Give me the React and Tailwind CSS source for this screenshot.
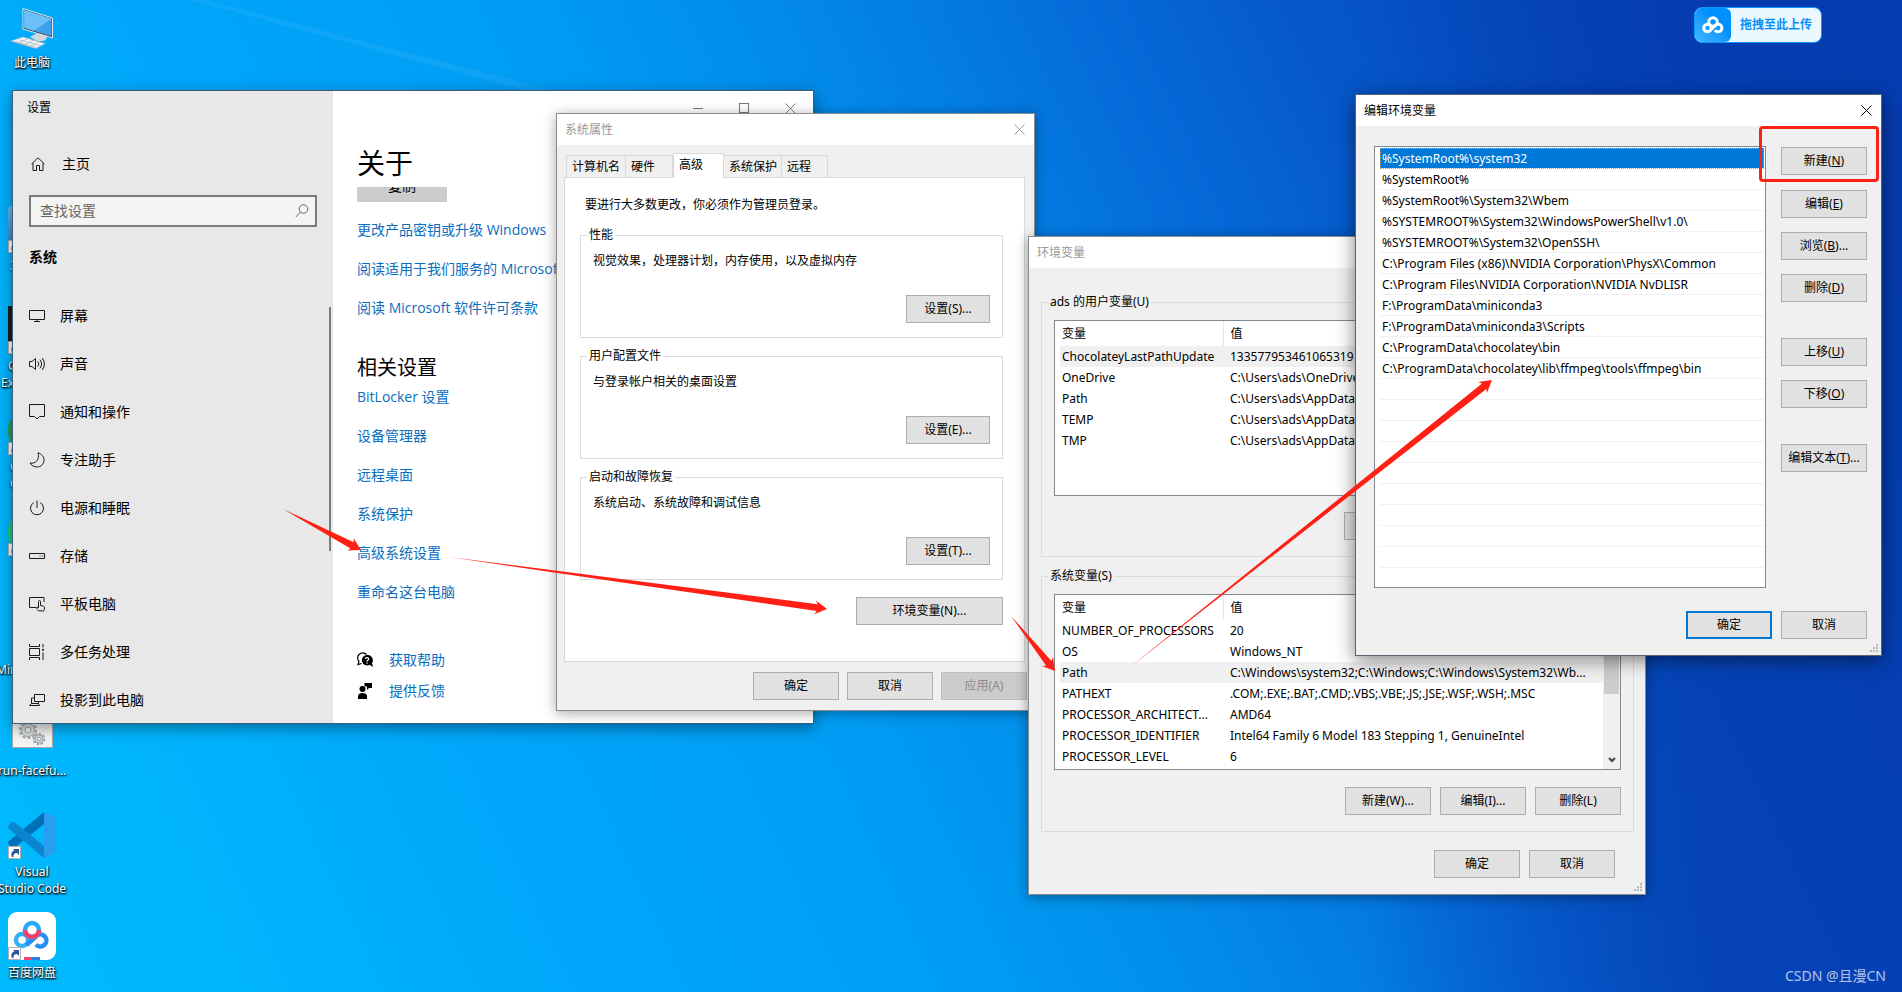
import clsx from 'clsx'

const navItems = [
  { icon: 'display', label: '屏幕' },
  { icon: 'sound', label: '声音' },
  { icon: 'notify', label: '通知和操作' },
  { icon: 'moon', label: '专注助手' },
  { icon: 'power', label: '电源和睡眠' },
  { icon: 'storage', label: '存储' },
  { icon: 'tablet', label: '平板电脑' },
  { icon: 'multitask', label: '多任务处理' },
  { icon: 'project', label: '投影到此电脑' },
]

const aboutLinks = ['更改产品密钥或升级 Windows', '阅读适用于我们服务的 Microsoft', '阅读 Microsoft 软件许可条款']

const relatedLinks = ['BitLocker 设置', '设备管理器', '远程桌面', '系统保护', '高级系统设置', '重命名这台电脑']

const propGroups = [
  { title: '性能', text: '视觉效果，处理器计划，内存使用，以及虚拟内存', button: '设置(S)...' },
  { title: '用户配置文件', text: '与登录帐户相关的桌面设置', button: '设置(E)...' },
  { title: '启动和故障恢复', text: '系统启动、系统故障和调试信息', button: '设置(T)...' },
]

const userVars = [
  ['ChocolateyLastPathUpdate', '133577953461065319'],
  ['OneDrive', 'C:\\Users\\ads\\OneDrive'],
  ['Path', 'C:\\Users\\ads\\AppData'],
  ['TEMP', 'C:\\Users\\ads\\AppData'],
  ['TMP', 'C:\\Users\\ads\\AppData'],
]

const systemVars = [
  ['NUMBER_OF_PROCESSORS', '20'],
  ['OS', 'Windows_NT'],
  ['Path', 'C:\\Windows\\system32;C:\\Windows;C:\\Windows\\System32\\Wb...'],
  ['PATHEXT', '.COM;.EXE;.BAT;.CMD;.VBS;.VBE;.JS;.JSE;.WSF;.WSH;.MSC'],
  ['PROCESSOR_ARCHITECT...', 'AMD64'],
  ['PROCESSOR_IDENTIFIER', 'Intel64 Family 6 Model 183 Stepping 1, GenuineIntel'],
  ['PROCESSOR_LEVEL', '6'],
]

const pathEntries = [
  '%SystemRoot%\\system32',
  '%SystemRoot%',
  '%SystemRoot%\\System32\\Wbem',
  '%SYSTEMROOT%\\System32\\WindowsPowerShell\\v1.0\\',
  '%SYSTEMROOT%\\System32\\OpenSSH\\',
  'C:\\Program Files (x86)\\NVIDIA Corporation\\PhysX\\Common',
  'C:\\Program Files\\NVIDIA Corporation\\NVIDIA NvDLISR',
  'F:\\ProgramData\\miniconda3',
  'F:\\ProgramData\\miniconda3\\Scripts',
  'C:\\ProgramData\\chocolatey\\bin',
  'C:\\ProgramData\\chocolatey\\lib\\ffmpeg\\tools\\ffmpeg\\bin',
]

const arrows = [
  { from: [283, 509], to: [361, 550], width: 7 },
  { from: [449, 557], to: [827, 609], width: 7 },
  { from: [1011, 616], to: [1055, 671], width: 7 },
  { from: [1129, 668], to: [1492, 380], width: 7 },
]

const iconPaths = {
  home: 'M1.5 8 8 1.8 14.5 8M3 7v7.5h3.5V9.5h3v5H13V7',
  display: 'M.5 2.5h15v9H.5zM8 11.5v2M5 13.5h6',
  sound: 'M.5 5.5h2.5l3.5-3v11l-3.5-3H.5zM8.8 5.5q2 2.500 0 5M11 3.700q3.200 4.300 0 8.600M13.200 2q4.500 6 0 12',
  notify: 'M.5 .5h15v12h-5l-2.500 2.500-2.500-2.500h-5z',
  moon: 'M9 .8c3.500 1 6.200 4 6 7.700-.2 3.800-3.200 6.500-7 6.500-3 0-5.500-1.500-7-4 5.500 1.200 10-3.500 8-10.200z',
  power: 'M8 .5v7.500M4.800 2.600a6.500 6.500 0 1 0 6.400 0',
  storage: 'M.5 5.500h15v5H.5zM10.500 8h1M12.800 8h1',
  tablet: 'M15 6V1.500H.5v10H7M9.500 14.800c-1.500-1.500-2-2.500-1.800-3.500.8-.3 1.500.2 1.800.7V5.500c0-1.300 2-1.300 2 0v4l3 .7c.8.300 1 .8 1 1.800 0 1.500-.5 2.300-1 3z',
  multitask: 'M.5 0v2.500h10V0M.5 4.500h10v7H.5zM.5 16v-2.500h10V16M14 0v3.500M14 8.500V16M14 4.500v2.500M13 5.800h2',
  project: 'M5.500 2.500h10v7h-10zM5.500 6H2.500v5.500h7V9.500M2.500 11.500l-2 2h10l-1-2',
}

function LineIcon({ name }) {
  return (
    <svg viewBox="0 0 16 16" className="h-4 w-4 shrink-0" fill="none" stroke="#1a1a1a">
      <path d={iconPaths[name]} />
    </svg>
  )
}

function CloseIcon() {
  return (
    <svg viewBox="0 0 11 11" className="h-[11px] w-[11px]" fill="none" stroke="currentColor">
      <path d="M.5.5l10 10M10.500.5l-10 10" />
    </svg>
  )
}

function PushButton({ children, className, ...props }) {
  return (
    <button
      type="button"
      className={clsx(
        'h-7 shrink-0 whitespace-nowrap border text-center disabled:border-[#bfbfbf] disabled:bg-[#cccccc] disabled:text-[#8a8a8a]',
        className ?? 'w-[86px] border-[#adadad] bg-[#e1e1e1]'
      )}
      {...props}
    >
      {children}
    </button>
  )
}

function TitleBar({ title, active }) {
  return (
    <div className={clsx('flex h-[31px] items-center justify-between bg-white pl-2 pr-[9px]', active ? 'text-black' : 'text-[#999999]')}>
      <h2>{title}</h2>
      <button type="button" aria-label="关闭">
        <CloseIcon />
      </button>
    </div>
  )
}

function ResizeGrip() {
  return (
    <svg viewBox="0 0 10 10" className="absolute bottom-0.5 right-0.5 h-2.5 w-2.5" fill="#b8b8b8">
      <path d="M7 1h2v2H7zM4 4h2v2H4zM7 4h2v2H7zM1 7h2v2H1zM4 7h2v2H4zM7 7h2v2H7z" />
    </svg>
  )
}

function SettingsWindow() {
  return (
    <section className="absolute left-3 top-[90px] flex h-[634px] w-[802px] overflow-hidden border border-[#3f5f78] bg-white font-['Open_Sans','Noto_Sans_CJK_SC',sans-serif] text-sm text-black shadow-[0_4px_14px_rgba(0,0,0,0.4)]">
      <div className="relative w-80 shrink-0 bg-[#e8e8e8]">
        <h2 className="flex h-[34px] items-center pl-3.5 text-xs">设置</h2>
        <a href="#home" className="mt-[19px] flex h-10 items-center gap-4 pl-[17px]">
          <LineIcon name="home" />
          主页
        </a>
        <label className="mx-4 mt-[11px] flex h-8 w-72 items-center border-2 border-[#7b7b7b] bg-[#f4f4f4] pl-[9px] pr-1.5">
          <span className="sr-only">查找设置</span>
          <input type="text" placeholder="查找设置" className="min-w-0 flex-1 bg-transparent outline-none placeholder:text-[#666666]" />
          <svg viewBox="0 0 14 14" className="h-3.5 w-3.5" fill="none" stroke="#666666">
            <circle cx="8.500" cy="5" r="4.300" />
            <path d="M5.500 8 .8 13" />
          </svg>
        </label>
        <h3 className="mt-5 pl-4 font-bold leading-5">系统</h3>
        <nav className="mt-[25px]">
          {navItems.map((item) => (
            <a key={item.icon} href={`#${item.icon}`} className="flex h-12 items-center gap-[15px] pl-4">
              <LineIcon name={item.icon} />
              {item.label}
            </a>
          ))}
        </nav>
        <div className="absolute right-0.5 top-[216px] h-[244px] w-0.5 bg-[#7d7d7d]" />
      </div>

      <div className="min-w-0 flex-1">
        <div className="flex h-[34px] justify-end text-[#777777]">
          <button type="button" aria-label="最小化" className="flex w-[46px] items-center justify-center">
            <span className="h-px w-2.5 bg-[#777777]" />
          </button>
          <button type="button" aria-label="最大化" className="flex w-[46px] items-center justify-center">
            <span className="h-2.5 w-2.5 border border-[#777777]" />
          </button>
          <button type="button" aria-label="关闭" className="flex w-[46px] items-center justify-center">
            <CloseIcon />
          </button>
        </div>
        <div className="pl-6">
          <h1 className="mt-5 text-[28px] leading-9">关于</h1>
          <div className="mt-1.5 flex h-[15px] items-end overflow-hidden">
            <button type="button" className="h-8 w-[90px] shrink-0 bg-[#cccccc]">复制</button>
          </div>
          <div className="mt-[18px] flex flex-col items-start gap-[19px] whitespace-nowrap leading-5 text-[#0a6dbd]">
            {aboutLinks.map((text) => (
              <a key={text} href="#about">{text}</a>
            ))}
          </div>
          <h2 className="mt-9 text-xl leading-7">相关设置</h2>
          <div className="mt-[5px] flex flex-col items-start gap-[19px] leading-5 text-[#0a6dbd]">
            {relatedLinks.map((text) => (
              <a key={text} href="#related">{text}</a>
            ))}
          </div>
          <div className="mt-12 flex flex-col items-start gap-[11px] leading-5 text-[#0a6dbd]">
            <a href="#help" className="flex items-center gap-4">
              <svg viewBox="0 0 16 16" className="h-4 w-4">
                <path d="M9.500 2.500A5 5 0 1 0 2 9.500L1 12.500l3.500-1" fill="none" stroke="#000" strokeWidth="1.200" />
                <path d="M10 3a5.200 5.200 0 1 0 2.500 9.800L16 15l-1-4A5.200 5.200 0 0 0 10 3z" fill="#000" />
                <path d="M8.300 7c.2-2 3.400-1.900 3.400 0 0 1.200-1.700 1.200-1.700 2.500M10 10.500v1.200" fill="none" stroke="#fff" strokeWidth="1.200" />
              </svg>
              获取帮助
            </a>
            <a href="#feedback" className="flex items-center gap-4">
              <svg viewBox="0 0 16 16" className="h-4 w-4" fill="#000">
                <circle cx="5.500" cy="6" r="3" />
                <path d="M1 16v-3c0-4 9-4 9 0v3zM7.500 0H15v5h-3l-2 2V3.500H7.500z" />
              </svg>
              提供反馈
            </a>
          </div>
        </div>
      </div>
    </section>
  )
}

function GroupBox({ title, className, children }) {
  return (
    <fieldset className={clsx('border border-[#dcdcdc] px-3', className)}>
      <legend className="-ml-1.5 px-0.5 leading-[18px]">{title}</legend>
      {children}
    </fieldset>
  )
}

function Tab({ children, active, className }) {
  return (
    <button
      type="button"
      role="tab"
      aria-selected={Boolean(active)}
      className={clsx(
        'border border-b-0 border-[#d9d9d9] pl-[5px] text-left',
        active ? '-mb-px h-[25px] bg-white' : 'h-[22px] bg-[#f0f0f0]',
        className
      )}
    >
      {children}
    </button>
  )
}

function SystemPropertiesWindow() {
  return (
    <section className="absolute left-[556px] top-[113px] w-[479px] border border-[#8c8c8c] bg-[#f0f0f0] pb-2.5 shadow-[0_2px_12px_rgba(0,0,0,0.35)]">
      <TitleBar title="系统属性" />
      <div role="tablist" className="relative ml-[9px] flex h-8 items-end">
        <Tab className="w-[60px]">计算机名</Tab>
        <Tab className="w-[47px] border-l-0">硬件</Tab>
        <Tab active className="w-[51px] pb-0.5">高级</Tab>
        <Tab className="w-[58px] border-l-0">系统保护</Tab>
        <Tab className="w-[46px] border-l-0">远程</Tab>
      </div>
      <div className="ml-[7px] mr-[9px] h-[485px] border border-[#d9d9d9] bg-white pl-[15px] pr-[21px]">
        <p className="ml-[5px] mt-[18px] leading-[18px]">要进行大多数更改，你必须作为管理员登录。</p>
        <div className="mt-3 flex flex-col gap-[9px]">
          {propGroups.map((group) => (
            <GroupBox key={group.title} title={group.title} className="pb-3.5">
              <p className="mt-2 leading-[18px]">{group.text}</p>
              <div className="mt-[25px] flex justify-end">
                <PushButton className="w-[84px] border-[#adadad] bg-[#e1e1e1]">{group.button}</PushButton>
              </div>
            </GroupBox>
          ))}
        </div>
        <div className="mt-[17px] flex justify-end">
          <PushButton className="w-[147px] border-[#adadad] bg-[#e1e1e1]">环境变量(N)...</PushButton>
        </div>
      </div>
      <div className="mr-[7px] mt-2.5 flex justify-end gap-2">
        <PushButton>确定</PushButton>
        <PushButton>取消</PushButton>
        <PushButton disabled>应用(A)</PushButton>
      </div>
    </section>
  )
}

function VariableList({ rows, selected, scroll }) {
  return (
    <div className="flex h-44 justify-between border border-[#828790] bg-white pl-[5px]">
      <table className="w-[543px] table-fixed self-start border-collapse text-left">
        <thead>
          <tr className="h-[25px]">
            <th className="w-[163px] border-r border-[#e5e5e5] p-0 pl-0.5 font-normal">变量</th>
            <th className="p-0 pl-[7px] font-normal">值</th>
          </tr>
        </thead>
        <tbody>
          {rows.map(([name, value], i) => (
            <tr key={name} className={clsx('h-[21px] whitespace-nowrap', i === selected && 'bg-[#f0f0f0]')}>
              <td className="p-0 pl-0.5 leading-[21px]">{name}</td>
              <td className="p-0 pl-[7px] leading-[21px]">{value}</td>
            </tr>
          ))}
        </tbody>
      </table>
      {scroll && (
        <div className="flex w-[17px] flex-col items-center justify-between bg-[#f0f0f0] pb-1.5">
          <div className="h-[99px] w-[15px] bg-[#cdcdcd]" />
          <svg viewBox="0 0 8 6" className="h-1.5 w-2" fill="none" stroke="#444444" strokeWidth="2">
            <path d="M1 1l3 3 3-3" />
          </svg>
        </div>
      )}
    </div>
  )
}

function EnvironmentWindow() {
  return (
    <section className="absolute left-[1028px] top-[236px] w-[618px] border border-[#8c8c8c] bg-[#f0f0f0] pb-4 shadow-[0_2px_12px_rgba(0,0,0,0.4)]">
      <TitleBar title="环境变量" />
      <div className="mt-[25px] flex flex-col gap-2.5 px-3">
        <GroupBox title="ads 的用户变量(U)" className="pb-4">
          <div className="mt-[9px]">
            <VariableList rows={userVars} selected={0} />
          </div>
          <div className="mt-4 flex justify-end gap-[9px]">
            <PushButton>新建(N)...</PushButton>
            <PushButton>编辑(E)...</PushButton>
            <PushButton>删除(D)</PushButton>
          </div>
        </GroupBox>
        <GroupBox title="系统变量(S)" className="pb-4">
          <div className="mt-[9px]">
            <VariableList rows={systemVars} selected={2} scroll />
          </div>
          <div className="mt-[17px] flex justify-end gap-[9px]">
            <PushButton>新建(W)...</PushButton>
            <PushButton>编辑(I)...</PushButton>
            <PushButton>删除(L)</PushButton>
          </div>
        </GroupBox>
      </div>
      <div className="mr-[30px] mt-[18px] flex justify-end gap-[9px]">
        <PushButton>确定</PushButton>
        <PushButton>取消</PushButton>
      </div>
      <ResizeGrip />
    </section>
  )
}

function EditWindow() {
  return (
    <section className="absolute left-[1355px] top-[94px] w-[527px] border border-[#5a6470] bg-[#f0f0f0] pb-4 shadow-[0_4px_18px_rgba(0,0,0,0.5)]">
      <TitleBar title="编辑环境变量" active />
      <div className="mt-5 flex justify-between pl-[18px] pr-3.5">
        <ul className="h-[442px] w-[392px] overflow-hidden border border-[#828790] bg-white pl-[5px] pr-px pt-px">
          {Array.from({ length: 20 }, (_, i) => (
            <li
              key={i}
              className={clsx(
                'h-[21px] whitespace-pre border-b border-[#f1f1f1] pl-0.5 leading-[22px]',
                i === 0 && 'bg-[#0078d7] text-white outline-1 -outline-offset-1 outline-dotted outline-[#e89a4a]'
              )}
            >
              {pathEntries[i]}
            </li>
          ))}
        </ul>
        <div className="relative flex flex-col pt-px">
          <PushButton>新建(<u>N</u>)</PushButton>
          <div className="mt-[15px] flex flex-col gap-3.5">
            <PushButton>编辑(<u>E</u>)</PushButton>
            <PushButton>浏览(<u>B</u>)...</PushButton>
            <PushButton>删除(<u>D</u>)</PushButton>
          </div>
          <div className="mt-9 flex flex-col gap-3.5">
            <PushButton>上移(<u>U</u>)</PushButton>
            <PushButton>下移(<u>O</u>)</PushButton>
          </div>
          <div className="mt-9">
            <PushButton>编辑文本(<u>T</u>)...</PushButton>
          </div>
          {/* highlight around the "new" button */}
          <div className="pointer-events-none absolute -left-[22px] -top-5 h-14 w-[120px] rounded-sm border-[3px] border-[#ff2015]" />
        </div>
      </div>
      <div className="mr-3.5 mt-[23px] flex justify-end gap-[9px]">
        <PushButton className="w-[86px] border-2 border-[#0078d7] bg-[#e1e1e1]">确定</PushButton>
        <PushButton>取消</PushButton>
      </div>
      <ResizeGrip />
    </section>
  )
}

function arrowPoints({ from, to, width }) {
  const dx = to[0] - from[0]
  const dy = to[1] - from[1]
  const len = Math.hypot(dx, dy)
  // along the arrow, then across it
  const at = (along, across) =>
    `${from[0] + (dx * along - dy * across) / len},${from[1] + (dy * along + dx * across) / len}`
  const neck = len - 10
  return [
    at(0, 0),
    at(neck, -width / 2),
    at(len - 12, -width),
    at(len, 0),
    at(len - 12, width),
    at(neck, width / 2),
  ].join(' ')
}

function Arrows() {
  return (
    <svg className="pointer-events-none absolute left-0 top-0 h-[992px] w-[1902px]" viewBox="0 0 1902 992" fill="#ff2015">
      {arrows.map((arrow) => (
        <polygon key={arrow.from.join()} points={arrowPoints(arrow)} />
      ))}
    </svg>
  )
}

function ShortcutBadge() {
  return (
    <svg viewBox="0 0 13 13" className="absolute bottom-0 left-0 h-[13px] w-[13px]">
      <path d="M.5.5h12v12H.5z" fill="#fff" stroke="#b0b0b0" />
      <path d="M4 11C2.500 7.500 4 5 6.500 4.500L5 3h6v6L9 7C6.500 7 5 8.500 5.500 11z" fill="#2b5797" />
    </svg>
  )
}

const labelStyle = 'text-center leading-[17px] text-white [text-shadow:0_1px_2px_#000,1px_1px_2px_#000]'

function DesktopIcons() {
  return (
    <>
      <div className="absolute left-[-16px] top-1.5 flex w-24 flex-col items-center">
        <svg viewBox="0 0 44 46" className="h-[46px] w-11">
          <path d="M13 2.500 42.500 12v20L13 23z" fill="#3b4d5c" stroke="#dfe9f0" />
          <path d="M14.200 4 41.500 12.700v17.600L14.200 21.800z" fill="#3ea0ec" />
          <path d="M14.200 4 41.500 12.700 24 24.800l-9.800-3z" fill="#6cc0f8" />
          <path d="M20 31l7-4 11 3-3 4.500-7 1z" fill="#cfd8de" />
          <path d="M1 35l12-4 22 6.500-9 5z" fill="#f2f5f7" stroke="#a9b4bc" strokeWidth=".7" />
          <path d="M5 35.500 27 41.500M9 33.800l22 6M8 37.500l10-5M14 39l10-5M20 40.500l9-4.500" stroke="#a9b4bc" strokeWidth=".7" fill="none" />
        </svg>
        <span className={clsx(labelStyle, 'mt-0.5')}>此电脑</span>
      </div>

      {/* icons mostly hidden behind the settings window */}
      <div className="absolute left-2 top-[206px] h-[47px] w-12 rounded bg-linear-to-b from-[#6fb7ee] to-[#2b78c8]">
        <ShortcutBadge />
      </div>
      <span className={clsx(labelStyle, 'absolute left-2.5 top-[257px]')}>3</span>
      <div className="absolute left-2 top-[306px] h-12 w-12 bg-[#1c1a1a]">
        <ShortcutBadge />
      </div>
      <span className={clsx(labelStyle, 'absolute left-2 top-[357px]')}>G</span>
      <span className={clsx(labelStyle, 'absolute left-px top-[374px]')}>Ex</span>
      <div className="absolute left-2 top-[407px] h-12 w-12 rounded-full bg-[#2f9e46]">
        <ShortcutBadge />
      </div>
      <span className={clsx(labelStyle, 'absolute left-2.5 top-[458px]')}>C</span>
      <span className={clsx(labelStyle, 'absolute left-2.5 top-[475px]')}>C</span>
      <div className="absolute left-2 top-[508px] h-12 w-12 rounded-full bg-[#1fd267]">
        <ShortcutBadge />
      </div>
      <span className={clsx(labelStyle, 'absolute left-[-4px] top-[661px]')}>Min</span>

      <div className="absolute left-[-16px] top-[699px] flex w-24 flex-col items-center">
        <svg viewBox="0 0 41 49" className="h-[49px] w-[41px]">
          <path d="M.5.5h40v48H.5z" fill="#f4f4f4" stroke="#a6a6a6" />
          <g fill="none" stroke="#a0a6ab">
            <circle cx="16" cy="31" r="6.500" fill="#dde1e4" />
            <circle cx="16" cy="31" r="8" strokeWidth="2" strokeDasharray="3 2" />
            <circle cx="16" cy="31" r="3" fill="#f4f4f4" />
            <circle cx="27" cy="40" r="4" fill="#dde1e4" />
            <circle cx="27" cy="40" r="5.300" strokeWidth="2" strokeDasharray="2.500 1.500" />
            <circle cx="27" cy="40" r="1.800" fill="#f4f4f4" />
          </g>
        </svg>
        <span className={clsx(labelStyle, 'mt-3.5')}>run-facefu...</span>
      </div>

      <div className="absolute left-[-16px] top-[811px] flex w-24 flex-col items-center">
        <div className="relative">
          <svg viewBox="0 0 48 48" className="h-12 w-12">
            <path d="M1 30c-1.500 1.500-1 3 0 4l2.500 2.500c1 .8 2.200.8 3.200 0L36 13V1z" fill="#0070b8" />
            <path d="M1 18c-1.500-1.500-1-3 0-4l2.500-2.500c1-.8 2.200-.8 3.200 0L36 35v12z" fill="#0a86cf" />
            <path d="M36 1 47 6c.8.400 1 1 1 2v32c0 1-.2 1.600-1 2l-11 5z" fill="#2a9df0" />
          </svg>
          <ShortcutBadge />
        </div>
        <span className={clsx(labelStyle, 'mt-1')}>
          Visual
          <br />
          Studio Code
        </span>
      </div>

      <div className="absolute left-[-16px] top-[912px] flex w-24 flex-col items-center">
        <div className="relative">
          <svg viewBox="0 0 48 48" className="h-12 w-12">
            <rect width="48" height="48" rx="9" fill="#fff" />
            <g fill="none" strokeWidth="4.500">
              <circle cx="14" cy="28" r="6" stroke="#2fb3f5" />
              <path d="M28 32.500a6 6 0 1 0 1-9L18.500 33" stroke="#2390f2" />
              <circle cx="24" cy="18" r="7" stroke="#28a9f4" />
              <path d="M17 18a7 7 0 0 0 14 0" stroke="#f5426c" />
            </g>
            <path d="M16 45h8v3h-8z" fill="#f5426c" />
            <path d="M24 45h8v3h-8z" fill="#2b7de0" />
          </svg>
          <ShortcutBadge />
        </div>
        <span className={clsx(labelStyle, 'mt-1')}>百度网盘</span>
      </div>
    </>
  )
}

function UploadWidget() {
  return (
    <button type="button" className="absolute right-20 top-[7px] flex h-9 w-32 items-center overflow-hidden rounded-lg border border-[#0a95ff] bg-[#ebf8ff] text-[#0a8ff5]">
      <span className="flex h-full w-9 items-center justify-center rounded-r-md bg-linear-to-tr from-[#3fb8ff] to-[#0090ff] to-60%">
        <svg viewBox="0 0 22 18" className="h-[18px] w-[22px]" fill="none" stroke="#fff" strokeWidth="3">
          <circle cx="11" cy="6" r="4.300" />
          <circle cx="5.500" cy="12" r="3.800" />
          <path d="M13 14.200a3.800 3.800 0 1 0 .6-5L8.500 14" />
        </svg>
      </span>
      <span className="flex-1 font-bold">拖拽至此上传</span>
    </button>
  )
}

export default function App() {
  return (
    <main className="relative min-h-screen overflow-hidden bg-[#0a5fd0] bg-[linear-gradient(90deg,rgba(5,60,176,0)_72%,rgba(5,60,176,0.75)_90%),linear-gradient(65deg,#00bafc_0%,#00b2fc_14%,#00a5fa_26%,#009ff5_38%,#0192ee_48%,#0380e4_57%,#056cda_65%,#0658cc_74%,#054cc0_82%,#053fb3_91%,#053ab0_100%)] font-['Noto_Sans','Noto_Sans_CJK_SC',sans-serif] text-xs">
      {/* light beam of the wallpaper */}
      <svg className="absolute inset-0 h-full w-full" viewBox="0 0 1902 992" preserveAspectRatio="none">
        <path d="M190 0 560 100 560 92 205 0z" fill="#5cc4ff" opacity=".15" />
      </svg>
      <DesktopIcons />
      <UploadWidget />
      <SettingsWindow />
      <SystemPropertiesWindow />
      <EnvironmentWindow />
      <EditWindow />
      <Arrows />
      <p className="absolute bottom-1.5 right-4 text-sm text-white/70">CSDN @且漫CN</p>
    </main>
  )
}
